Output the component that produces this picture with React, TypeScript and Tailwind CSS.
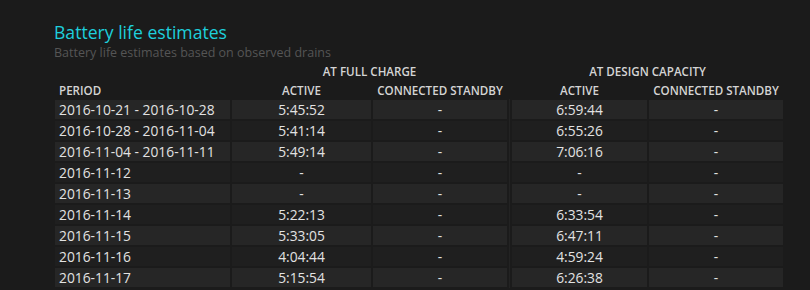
import React from 'react';

interface Row {
  period: string;
  fullActive: string;
  fullStandby: string;
  designActive: string;
  designStandby: string;
}

const rows: Row[] = [
  { period: '2016-10-21 - 2016-10-28', fullActive: '5:45:52', fullStandby: '-', designActive: '6:59:44', designStandby: '-' },
  { period: '2016-10-28 - 2016-11-04', fullActive: '5:41:14', fullStandby: '-', designActive: '6:55:26', designStandby: '-' },
  { period: '2016-11-04 - 2016-11-11', fullActive: '5:49:14', fullStandby: '-', designActive: '7:06:16', designStandby: '-' },
  { period: '2016-11-12', fullActive: '-', fullStandby: '-', designActive: '-', designStandby: '-' },
  { period: '2016-11-13', fullActive: '-', fullStandby: '-', designActive: '-', designStandby: '-' },
  { period: '2016-11-14', fullActive: '5:22:13', fullStandby: '-', designActive: '6:33:54', designStandby: '-' },
  { period: '2016-11-15', fullActive: '5:33:05', fullStandby: '-', designActive: '6:47:11', designStandby: '-' },
  { period: '2016-11-16', fullActive: '4:04:44', fullStandby: '-', designActive: '4:59:24', designStandby: '-' },
  { period: '2016-11-17', fullActive: '5:15:54', fullStandby: '-', designActive: '6:26:38', designStandby: '-' },
];

const gridCols = 'grid grid-cols-[175px_139px_134px_1px_135px_134px] gap-x-[2px]';

const App: React.FC = () => {
  return (
    <div
      className="w-[810px] h-[290px] overflow-hidden bg-[#1b1b1b] pl-[54px] pt-[20px]"
      style={{ fontFamily: '"Open Sans", "Noto Sans", sans-serif' }}
    >
      <h1 className="text-[17.6px] leading-[24px] text-[#1ecfdc]">Battery life estimates</h1>
      <p className="text-[12.5px] leading-[18px] text-[#555555]">Battery life estimates based on observed drains</p>

      <div className="ml-[1px] w-[728px]">
        {/* Group headers */}
        <div className={`${gridCols} h-[18px] mt-[1px] text-[11.6px] leading-[18px] font-semibold text-[#d4d4d4]`}>
          <div />
          <div className="col-span-2 text-center">AT FULL CHARGE</div>
          <div />
          <div className="col-span-2 text-center">AT DESIGN CAPACITY</div>
        </div>

        {/* Column headers */}
        <div className={`${gridCols} h-[19px] text-[11.6px] leading-[19px] font-semibold text-[#d4d4d4]`}>
          <div className="pl-[4px]">PERIOD</div>
          <div className="text-center">ACTIVE</div>
          <div className="text-center">CONNECTED STANDBY</div>
          <div />
          <div className="text-center">ACTIVE</div>
          <div className="text-center">CONNECTED STANDBY</div>
        </div>

        {/* Data rows */}
        <div className={`${gridCols} gap-y-[2px] text-[13.8px] leading-[19px] text-[#e2e2e2]`}>
          {rows.map((row, i) => {
            const bg = i % 2 === 0 ? 'bg-[#262626]' : 'bg-[#1f1f1f]';
            return (
              <React.Fragment key={row.period}>
                <div className={`${bg} h-[19px] pl-[4px] whitespace-nowrap`}>{row.period}</div>
                <div className={`${bg} h-[19px] text-center`}>{row.fullActive}</div>
                <div className={`${bg} h-[19px] text-center`}>{row.fullStandby}</div>
                <div className="bg-[#232323] -my-[1px]" />
                <div className={`${bg} h-[19px] text-center`}>{row.designActive}</div>
                <div className={`${bg} h-[19px] text-center`}>{row.designStandby}</div>
              </React.Fragment>
            );
          })}
        </div>
      </div>
    </div>
  );
};

export default App;
